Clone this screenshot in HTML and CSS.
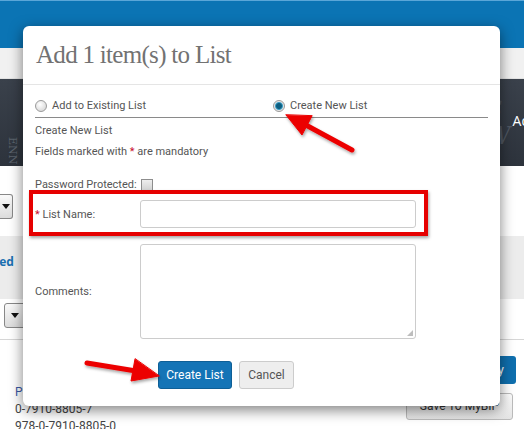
FILE: index.html
```html
<!DOCTYPE html>
<html lang="en">
<head>
  <meta charset="UTF-8">
  <title>Add to List</title>
  <link rel="stylesheet" href="styles.css">
</head>
<body>
  <div class="page">
    <div class="topbar"></div>
    <div class="subbar"></div>
    <div class="banner">
      <span class="banner-side">ENN</span>
      <span class="banner-right"><i class="script">S<br>W</i><span class="banner-text">Ad</span></span>
    </div>
    <div class="filter-row">
      <div class="select"><span class="caret"></span></div>
    </div>
    <div class="tabs-row">
      <span class="tab-link">ted</span>
    </div>
    <div class="sort-row">
      <div class="select select-wide"><span class="caret"></span></div>
    </div>
    <div class="results">
      <div class="result-info">
        <a class="result-title">P</a>
        <div>0-7910-8805-7</div>
        <div>978-0-7910-8805-0</div>
      </div>
      <div class="result-actions">
        <span class="btn-buy">Buy</span>
        <span class="btn-save">Save To MyBIP</span>
      </div>
    </div>
  </div>

  <div class="modal">
    <div class="modal-header">
      <h1 class="modal-title">Add 1 item(s) to List</h1>
    </div>
    <div class="modal-body">
      <div class="choice-row">
        <label class="choice"><span class="radio"></span>Add to Existing List</label>
        <label class="choice"><span class="radio checked"></span>Create New List</label>
      </div>
      <p class="line">Create New List</p>
      <p class="line">Fields marked with <span class="req">*</span> are mandatory</p>
      <div class="pw-row">Password Protected: <span class="checkbox"></span></div>
      <div class="field-row">
        <span class="field-label"><span class="req">*</span> List Name:</span>
        <span class="input"></span>
      </div>
      <div class="field-row">
        <span class="field-label">Comments:</span>
        <span class="input textarea"><span class="grip"></span></span>
      </div>
      <div class="actions">
        <span class="btn-primary">Create List</span>
        <span class="btn-default">Cancel</span>
      </div>
    </div>
  </div>

  <div class="highlight"></div>
  <svg class="arrows" width="524" height="429" viewBox="0 0 524 429">
    <defs>
      <filter id="shadow" x="-20%" y="-20%" width="140%" height="140%">
        <feDropShadow dx="1" dy="2" stdDeviation="1.5" flood-color="#000" flood-opacity="0.35"/>
      </filter>
    </defs>
    <g fill="#ec0000" stroke="#ec0000" stroke-linecap="round" filter="url(#shadow)">
      <line x1="352" y1="150" x2="304" y2="124" stroke-width="5"/>
      <polygon points="286,115 302,135 312,116" stroke-width="1"/>
      <line x1="87" y1="363" x2="136" y2="371" stroke-width="5"/>
      <polygon points="159,376 131,381 135,359" stroke-width="1"/>
    </g>
  </svg>
</body>
</html>
```

FILE: styles.css
```css
body {
  margin: 0;
  width: 524px;
  height: 429px;
  overflow: hidden;
  position: relative;
  font-family: Roboto, "Liberation Sans", sans-serif;
  font-size: 11px;
  color: #555;
  background: #fff;
}
.page {
  display: flex;
  flex-direction: column;
}
.topbar {
  height: 47px;
  background: #0b74b4;
  border-top: 1px solid #5aa6d8;
}
.subbar {
  height: 30px;
  background: #f1f1f1;
  border-bottom: 1px solid #e2e2e2;
}
.banner {
  height: 87px;
  background: linear-gradient(#3a414b, #2d333c);
  display: flex;
  justify-content: space-between;
  align-items: flex-end;
}
.banner-side {
  color: #5b636d;
  font-family: "DejaVu Serif", serif;
  font-size: 11px;
  writing-mode: vertical-rl;
  margin: 0 0 2px 6px;
}
.banner-right {
  display: flex;
  align-self: stretch;
  align-items: center;
}
.script {
  font-family: "DejaVu Serif", serif;
  font-size: 24px;
  line-height: 26px;
  color: #4f5762;
  margin-right: 2px;
}
.banner-text {
  color: #fff;
  font-size: 14px;
  font-family: "Open Sans", sans-serif;
  margin-right: -6px;
  margin-bottom: 4px;
}
.filter-row {
  height: 70px;
  box-sizing: border-box;
  padding-top: 28px;
}
.select {
  width: 12px;
  height: 23px;
  border: 1px solid #888;
  border-left: 0;
  border-radius: 0 3px 3px 0;
  background: linear-gradient(#fafafa, #dcdcdc);
  display: flex;
  align-items: center;
  justify-content: center;
}
.caret {
  width: 0;
  height: 0;
  border-left: 4px solid transparent;
  border-right: 4px solid transparent;
  border-top: 5px solid #111;
}
.tabs-row {
  height: 63px;
  background: #ececec;
  box-sizing: border-box;
  padding-top: 17px;
}
.tab-link {
  font-family: "Open Sans", sans-serif;
  font-weight: 700;
  font-size: 12px;
  color: #1a6fb0;
  margin-left: -6px;
}
.sort-row {
  height: 41px;
  box-sizing: border-box;
  padding-top: 4px;
  border-bottom: 1px solid #d6d6d6;
}
.select-wide {
  width: 20px;
  border-left: 1px solid #888;
  border-radius: 3px;
  margin-left: 4px;
}
.results {
  display: flex;
  justify-content: space-between;
  padding: 16px 8px 0 15px;
}
.result-info {
  padding-top: 28px;
  font-size: 12px;
  line-height: 17px;
  color: #444;
}
.result-title {
  color: #3a5aa5;
}
.result-actions {
  display: flex;
  flex-direction: column;
  align-items: flex-end;
  gap: 9px;
}
.btn-buy {
  width: 80px;
  height: 28px;
  box-sizing: border-box;
  background: #0f6fae;
  color: #fff;
  border-radius: 3px;
  text-align: right;
  padding-right: 12px;
  line-height: 28px;
  font-size: 13px;
}
.btn-save {
  width: 107px;
  height: 27px;
  box-sizing: border-box;
  border: 1px solid #bbb;
  border-radius: 3px;
  background: linear-gradient(#fdfdfd, #e4e4e4);
  color: #333;
  text-align: center;
  line-height: 25px;
  font-size: 12px;
  margin-right: 3px;
}

/* modal */
.modal {
  position: absolute;
  left: 23px;
  top: 26px;
  width: 477px;
  height: 380px;
  background: #fff;
  border-radius: 6px;
  box-shadow: 0 4px 14px rgba(0, 0, 0, 0.5);
}
.modal-header {
  height: 58px;
  border-bottom: 1px solid #e5e5e5;
  padding: 0 13px;
  display: flex;
  align-items: center;
}
.modal-title {
  margin: 0;
  font-family: "Liberation Serif", serif;
  font-weight: 400;
  font-size: 25px;
  letter-spacing: -0.7px;
  color: #727272;
}
.modal-body {
  padding: 0 12px;
}
.choice-row {
  display: grid;
  grid-template-columns: 238px 1fr;
  padding: 13px 0 3px;
  border-bottom: 1px solid #8a8a8a;
  line-height: 16px;
}
.choice {
  display: flex;
  align-items: center;
  gap: 5px;
}
.radio {
  width: 10px;
  height: 10px;
  border-radius: 50%;
  border: 1px solid #9a9a9a;
  background: radial-gradient(circle at 40% 35%, #fff, #cfcfcf);
}
.radio.checked {
  background: radial-gradient(circle, #0d5e80 0 2.5px, #3c9cc4 3.5px, #e8e8e8 4.5px);
}
.line {
  margin: 0;
  line-height: 21px;
}
.line:first-of-type {
  margin-top: 2px;
}
.req {
  color: #c8102e;
}
.pw-row {
  display: flex;
  align-items: center;
  gap: 4px;
  margin-top: 16px;
  line-height: 14px;
}
.checkbox {
  width: 10px;
  height: 10px;
  border: 1px solid #8d8d8d;
  background: linear-gradient(#eee, #d2d2d2);
}
.field-row {
  display: flex;
  align-items: center;
  margin-top: 8px;
}
.field-row + .field-row {
  margin-top: 16px;
}
.field-label {
  width: 105px;
}
.input {
  width: 274px;
  height: 26px;
  border: 1px solid #ccc;
  border-radius: 3px;
  position: relative;
}
.textarea {
  height: 93px;
}
.grip {
  position: absolute;
  right: 2px;
  bottom: 2px;
  width: 6px;
  height: 6px;
  background: radial-gradient(circle, #999 0.6px, transparent 0.9px) 0 0 / 2px 2px;
  clip-path: polygon(100% 0, 100% 100%, 0 100%);
}
.actions {
  display: flex;
  gap: 7px;
  margin-top: 22px;
  padding-left: 123px;
}
.btn-primary,
.btn-default {
  height: 28px;
  box-sizing: border-box;
  border-radius: 3px;
  line-height: 26px;
  font-size: 12px;
  text-align: center;
}
.btn-primary {
  width: 74px;
  background: #1474b6;
  border: 1px solid #0e5f96;
  color: #fff;
}
.btn-default {
  width: 55px;
  background: #eee;
  border: 1px solid #ccc;
  color: #555;
}

/* annotations */
.highlight {
  position: absolute;
  left: 29px;
  top: 190px;
  width: 391px;
  height: 38px;
  border: 4px solid #e60000;
  box-shadow: 1px 2px 3px rgba(0, 0, 0, 0.35);
}
.arrows {
  position: absolute;
  left: 0;
  top: 0;
}
```
